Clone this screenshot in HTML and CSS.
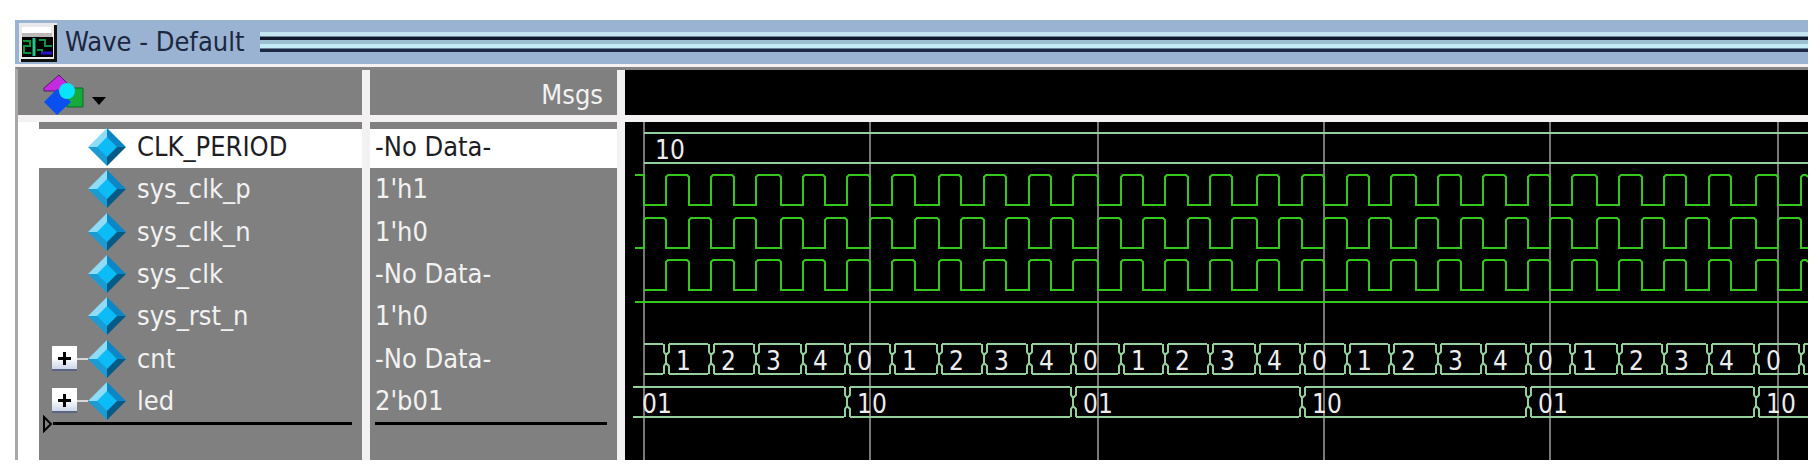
FILE: index.html
```html
<!DOCTYPE html>
<html lang="en">
<head>
<meta charset="utf-8">
<title>Wave - Default</title>
<link rel="stylesheet" href="styles.css">
</head>
<body>
<main class="window">
  <header class="titlebar">
    <svg class="app-icon" viewBox="0 0 38 39" aria-hidden="true">
      <path fill="#e9e9ec" d="M0 0h38v39H0z"/>
      <path fill="#111" d="M35 2h3v37H2v-3h33z"/>
      <path fill="#fff" d="M3 4h29v6H3z"/>
      <path fill="#bdb8b8" d="M3 10h30v4H3z"/>
      <path fill="#000" d="M3 14h31v20H3z"/>
      <path fill="none" stroke="#12913f" stroke-width="2" d="M4 18h7v5H5v7h7M20 17h6v6h7M18 27h5v4"/>
      <path fill="none" stroke="#22c68a" stroke-width="3" d="M15 15v18"/>
      <path fill="none" stroke="#2a14c8" stroke-width="3" d="M22 30h11"/>
    </svg>
    <h1 class="title">Wave - Default</h1>
    <div class="grip"></div>
  </header>
  <div class="panes">
    <section class="pane names">
      <div class="pane-head">
        <button class="format" type="button" aria-label="Format">
          <svg class="format-icon" viewBox="0 0 64 42" aria-hidden="true">
            <path fill="#c32be0" stroke="#5b1670" stroke-width="1" d="M1 14 16 1l9 9-6 7H1z"/>
            <path fill="#16a93c" stroke="#0b6a2a" stroke-width="1" d="M26 14h14v19H24z"/>
            <path fill="#0a4ff0" d="m14 15 14 13-14 13L1 28z"/>
            <circle cx="24" cy="17" r="8" fill="#08e4fa"/>
            <path fill="#000" d="M49 23h14l-7 8z"/>
          </svg>
        </button>
      </div>
      <div class="pane-body">
        <div class="gutter"></div>
        <div class="list">
          <ul class="rows" id="names"></ul>
          <svg class="marker" viewBox="0 0 10 18" aria-hidden="true"><path fill="none" stroke="#000" stroke-width="2" d="M1 2v14l7-7z"/></svg>
          <hr class="end">
        </div>
      </div>
    </section>
    <section class="pane values">
      <div class="pane-head head-right">Msgs</div>
      <div class="pane-body">
        <div class="list">
          <ul class="rows">
            <li class="row selected">-No Data-</li>
            <li class="row">1'h1</li>
            <li class="row">1'h0</li>
            <li class="row">-No Data-</li>
            <li class="row">1'h0</li>
            <li class="row">-No Data-</li>
            <li class="row">2'b01</li>
          </ul>
          <hr class="end">
        </div>
      </div>
    </section>
    <section class="pane waves">
      <div class="pane-head"></div>
      <svg class="chart" id="chart" width="1183" height="338"></svg>
    </section>
  </div>
</main>
<script src="wave.js"></script>
</body>
</html>
```
FILE: styles.css
```css
* { box-sizing: border-box; }
body {
  margin: 0;
  padding: 20px 12px 14px 15px;
  background: #fff;
  color: #f2f2f2;
  font: 27px/32px "DejaVu Sans Condensed", "DejaVu Sans", sans-serif;
}
.window { background: #f3f1f1; }
.titlebar {
  display: flex;
  align-items: center;
  height: 44px;
  padding-left: 4px;
  background: #9ab3d2;
}
.app-icon { width: 38px; height: 39px; flex: none; }
.title {
  margin: 0 16px 0 8px;
  color: #1c2740;
  font-size: 27px;
  font-weight: normal;
  white-space: nowrap;
}
.grip {
  flex: 1;
  height: 20px;
  background: linear-gradient(#c3e6f2 0 4px, #6d8499 4px 5px, #12182e 5px 8px, #9cc0cf 8px 12px, #c3ecf6 12px 16px, #6d8499 16px 17px, #1d2945 17px 20px);
}
.panes {
  display: grid;
  grid-template-columns: 344px 247px 1fr;
  gap: 8px;
  margin-top: 3px;
  border-top: 3px solid #848484;
  border-left: 3px solid #a8a8a8;
}
.pane { display: flex; flex-direction: column; gap: 7px; min-width: 0; }
.pane-head {
  display: flex;
  align-items: center;
  height: 45px;
  padding: 4px 14px 0 25px;
  background: #808080;
}
.head-right { justify-content: flex-end; }
.waves .pane-head { background: #000; }
.pane-body { display: flex; height: 338px; }
.gutter { width: 21px; background: #fff; }
.list { position: relative; flex: 1; padding-top: 4px; background: #808080; }
.rows {
  display: grid;
  grid-auto-rows: 1fr;
  height: 296px;
  margin: 0;
  padding: 0;
  list-style: none;
}
.row { display: flex; align-items: center; padding-left: 5px; white-space: nowrap; }
.selected {
  color: #1d1d24;
  background: linear-gradient(transparent 3px, #fff 3px);
}
.names .row { padding-left: 13px; }
.branch { display: flex; align-items: center; width: 36px; }
.branch::after { content: ""; flex: 1; height: 2px; background: #d8d8d8; }
.branch:empty::after { content: none; }
.expand {
  width: 25px;
  height: 25px;
  padding: 0;
  border: 0;
  border-bottom: 2px solid #5a6684;
  background: linear-gradient(#fff 50%, #ccd6ea);
}
.expand svg, .gem { display: block; }
.gem { width: 38px; height: 38px; margin-right: 11px; }
.format { padding: 0; border: 0; background: none; }
.format-icon { display: block; width: 64px; height: 42px; }
.marker { position: absolute; left: 4px; top: 293px; width: 10px; height: 18px; }
.end { margin: 0 10px 0 5px; border: 0; border-top: 3px solid #000; }
.names .end { margin-left: 14px; }
.chart { display: block; width: 100%; height: 338px; background: #000; }
.chart path { fill: none; stroke-width: 2; }
.chart .cursor { stroke: #777; }
.chart .bus { stroke: #94cf9c; }
.chart .bit { stroke: #35c81c; }
.chart text { fill: #ededed; font-size: 26px; }
```
FILE: wave.js
```js
const names = ["CLK_PERIOD", "sys_clk_p", "sys_clk_n", "sys_clk", "sys_rst_n", "cnt", "led"];
const gem = `<svg class="gem" viewBox="0 0 38 38" aria-hidden="true">
  <path fill="#8fdcf8" d="M19 0v10l-9 9H0z"/><path fill="#0c86c4" d="m19 0 19 19H28l-9-9z"/>
  <path fill="#1b9bd4" d="M0 19h10l9 9v10z"/><path fill="#065a86" d="M38 19 19 38V28l9-9z"/>
  <path fill="#0cbcf6" d="m19 9 10 10-10 10L9 19z"/></svg>`;
document.getElementById("names").innerHTML = names.map((name, i) => {
  const box = i > 4
    ? `<button class="expand" type="button" aria-label="Expand ${name}"><svg viewBox="0 0 25 25" aria-hidden="true"><path fill="none" stroke="#000" stroke-width="3" d="M6 12.500h13M12.500 6v13"/></svg></button>`
    : "";
  return `<li class="row${i ? "" : " selected"}"><span class="branch">${box}</span>${gem}<span>${name}</span></li>`;
}).join("");

/* Half-period edges of the clock, relative to the left side of the wave pane. */
const edges = [19, 41, 64, 86, 109, 131, 156, 178, 200, 222, 245, 267, 290, 314, 336, 359, 381, 404, 426, 448,
  473, 496, 518, 540, 563, 585, 607, 632, 654, 677, 699, 722, 744, 766, 791, 813, 836, 858, 881, 903,
  925, 947, 972, 994, 1017, 1039, 1061, 1084, 1106, 1131, 1153, 1176];
const right = 1183;

function clock(high, low, startsHigh, lead) {
  let up = startsHigh;
  let d = lead ? `M10 ${up ? high : low}H${edges[0]}` : `M${edges[0]} ${low}`;
  edges.forEach((x, i) => {
    if (i || lead) {
      up = !up;
      d += up ? `V${high + 2}l2 -2` : `V${low}`;
    }
    const next = edges[i + 1] || right;
    d += up ? `H${next - 2}l2 2` : `H${next}`;
  });
  return `<path class="bit" d="${d}"/>`;
}

function bus(top, bottom, start, cuts, labels) {
  let d = "";
  let from = start;
  [...cuts, right + 6].forEach((x, i) => {
    const a = i ? from + 3 : from;
    const b = x - 3;
    d += `M${a} ${top}H${b}M${a} ${bottom}H${b}`;
    if (x < right) {
      const upper = top + 8;
      const lower = bottom - 8;
      d += `M${x - 2} ${top}V${upper}L${x} ${upper + 3}V${lower - 3}L${x - 2} ${lower}V${bottom}`
        + `M${x + 3} ${top}V${upper}L${x} ${upper + 3}M${x} ${lower - 3}L${x + 3} ${lower}V${bottom}`;
    }
    from = x;
  });
  return `<path class="bus" d="${d}"/>` + labels.map(([x, t]) => `<text x="${x}" y="${bottom - 4}">${t}</text>`).join("");
}

const cntCuts = edges.filter((x, i) => i % 2);
const cntLabels = cntCuts.slice(0, -1).map((x, i) => [x + 10, (i + 1) % 5]);
const ledCuts = edges.filter((x, i) => i % 10 === 9);
const ledLabels = [[17, "01"], ...ledCuts.map((x, i) => [x + 10, i % 2 ? "01" : "10"])];
document.getElementById("chart").innerHTML =
  `<path class="cursor" d="${edges.filter((x, i) => i % 10 === 0).map(x => `M${x} 0V338`).join("")}"/>` +
  bus(11, 41, 19, [], [[30, "10"]]) +
  clock(53, 83, true, true) +
  clock(96, 126, false, true) +
  clock(138, 168, false, false) +
  `<path class="bit" d="M10 180H${right}"/>` +
  bus(222, 252, 19, cntCuts, cntLabels) +
  bus(265, 295, 8, ledCuts, ledLabels);
```
